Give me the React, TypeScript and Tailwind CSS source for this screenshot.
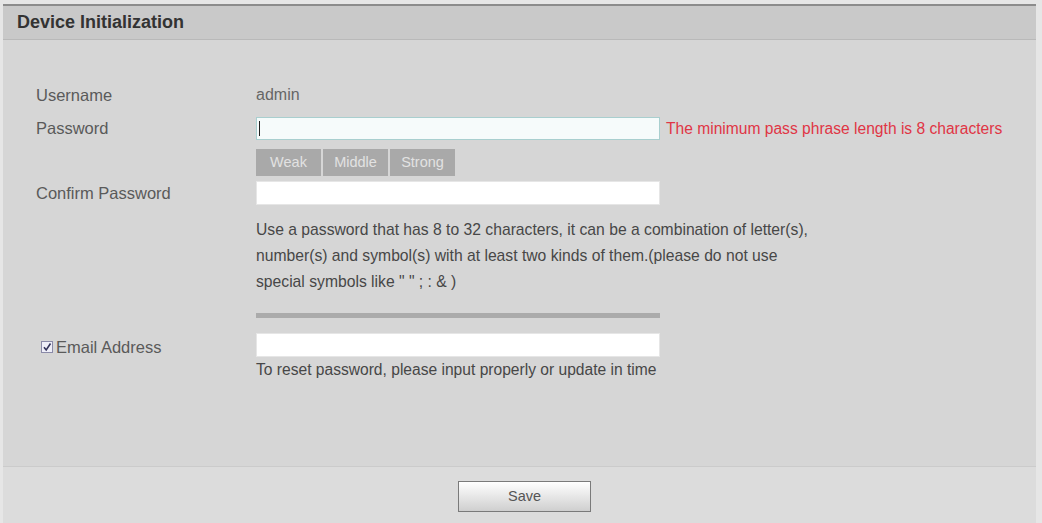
import React from "react";

const font = { fontFamily: '"Liberation Sans", Arial, sans-serif' };

// Rangée du formulaire : libellé à gauche, contenu à droite
function Row({
  label,
  className,
  children,
}: {
  label?: React.ReactNode;
  className?: string;
  children?: React.ReactNode;
}) {
  return (
    <div className={"flex items-center " + (className ?? "")}>
      <div className="w-[220px] shrink-0 text-[16.5px] text-[#5a5a5a]">{label}</div>
      <div className="flex items-center">{children}</div>
    </div>
  );
}

export default function App() {
  return (
    <div
      className="w-[1042px] h-[523px] bg-[#e6e6e6] pt-[4px] pl-[3px] overflow-hidden"
      style={font}
    >
      <div className="w-[1033px] h-[519px] flex flex-col border-t-2 border-[#8c8c8c] bg-[#d6d6d6]">
        {/* En-tête */}
        <div className="h-[34px] shrink-0 flex items-center pl-[14px] bg-[#c9c9c9] border-b border-[#b9b9b9]">
          <span className="text-[18px] font-bold text-[#333]">Device Initialization</span>
        </div>

        {/* Corps du formulaire */}
        <div className="flex-1 pl-[33px] pt-[42px]">
          <Row label="Username" className="h-[26px]">
            <span className="text-[16px] text-[#666]">admin</span>
          </Row>

          <Row label="Password" className="mt-[9px] h-[23px]">
            <div className="w-[404px] h-[23px] bg-[#f6fbfb] border border-[#a9cfcf] flex items-center pl-[2px]">
              <div className="w-px h-[15px] bg-[#222]" />
            </div>
            <span className="ml-[6px] text-[15.6px] text-[#e03545]">
              The minimum pass phrase length is 8 characters
            </span>
          </Row>

          <Row className="mt-[9px] h-[27px]">
            <div className="flex gap-[2px] text-[14.5px] text-[#e2e2e2]">
              <div className="w-[65px] h-[27px] bg-[#a9a9a9] flex items-center justify-center">Weak</div>
              <div className="w-[65px] h-[27px] bg-[#a9a9a9] flex items-center justify-center">Middle</div>
              <div className="w-[65px] h-[27px] bg-[#a9a9a9] flex items-center justify-center">Strong</div>
            </div>
          </Row>

          <Row label="Confirm Password" className="mt-[5px] h-[24px]">
            <div className="w-[404px] h-[24px] bg-white border border-[#e6e6e6]" />
          </Row>

          <Row className="mt-[12px]">
            <div className="text-[15.7px] leading-[26px] text-[#474747]">
              <div>Use a password that has 8 to 32 characters, it can be a combination of letter(s),</div>
              <div>number(s) and symbol(s) with at least two kinds of them.(please do not use</div>
              <div>special symbols like " " ; : &amp; )</div>
            </div>
          </Row>

          <Row className="mt-[18px]">
            <div className="w-[404px] h-[5px] bg-[#ababab]" />
          </Row>

          <Row
            className="mt-[15px] h-[24px]"
            label={
              <div className="flex items-center ml-[5px] pt-[4px]">
                <div className="w-[12px] h-[12px] border border-[#8a8aa8] bg-[#eeeef8] flex items-center justify-center">
                  <svg width="10" height="10" viewBox="0 0 10 10">
                    <path d="M2 5.2 L4.2 8 L8.5 1.5" fill="none" stroke="#33335a" strokeWidth="1.6" />
                  </svg>
                </div>
                <span className="ml-[3px]">Email Address</span>
              </div>
            }
          >
            <div className="w-[404px] h-[24px] bg-white border border-[#e6e6e6]" />
          </Row>

          <Row className="mt-[1px]">
            <span className="text-[15.6px] text-[#474747]">
              To reset password, please input properly or update in time
            </span>
          </Row>
        </div>

        {/* Pied de page */}
        <div className="h-[57px] shrink-0 bg-[#dcdcdc] border-t border-[#cbcbcb] flex justify-center pt-[14px] pl-[10px]">
          <button className="w-[133px] h-[31px] border border-[#7a7a7a] bg-gradient-to-b from-white to-[#cfcfcf] text-[14.5px] text-[#555]">
            Save
          </button>
        </div>
      </div>
    </div>
  );
}
